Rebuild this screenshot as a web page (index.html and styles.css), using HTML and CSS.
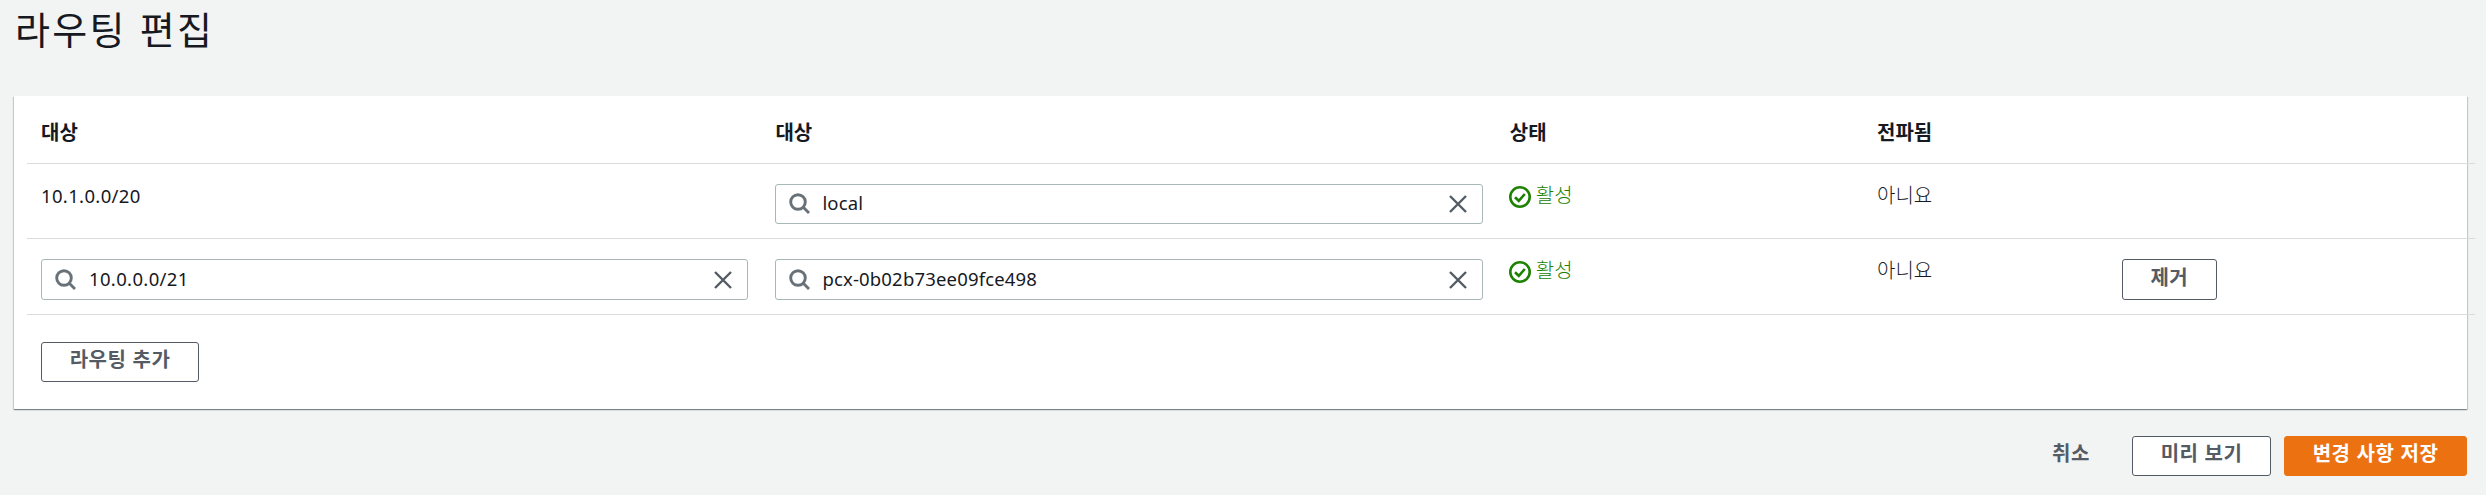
FILE: index.html
```html
<!DOCTYPE html>
<html lang="ko">
<head>
<meta charset="utf-8">
<title>라우팅 편집</title>
<link rel="stylesheet" href="styles.css">
</head>
<body>
<svg class="defs" width="0" height="0" aria-hidden="true">
  <symbol id="search" viewBox="0 0 22 22"><circle cx="9" cy="9" r="7.3"/><path d="M14 14l6 6"/></symbol>
  <symbol id="close" viewBox="0 0 20 20"><path d="M2 2l16 16M18 2L2 18"/></symbol>
  <symbol id="ok" viewBox="0 0 22 22"><circle cx="11" cy="11" r="9.7"/><path d="M6 11.2l3.8 3.6L15.8 8"/></symbol>
</svg>
<main class="page">
  <h1 class="title">라우팅 편집</h1>
  <section class="card">
    <div class="table">
      <div class="row head">
        <div class="cell">대상</div>
        <div class="cell">대상</div>
        <div class="cell">상태</div>
        <div class="cell">전파됨</div>
        <div class="cell"></div>
      </div>
      <div class="row">
        <div class="cell latin static">10.1.0.0/20</div>
        <div class="cell"><div class="field latin"><svg class="search"><use href="#search"/></svg><span class="value word">local</span><svg class="close"><use href="#close"/></svg></div></div>
        <div class="cell status"><svg class="ok"><use href="#ok"/></svg><span>활성</span></div>
        <div class="cell plain">아니요</div>
        <div class="cell"></div>
      </div>
      <div class="row last">
        <div class="cell"><div class="field latin"><svg class="search"><use href="#search"/></svg><span class="value">10.0.0.0/21</span><svg class="close"><use href="#close"/></svg></div></div>
        <div class="cell"><div class="field latin"><svg class="search"><use href="#search"/></svg><span class="value word">pcx-0b02b73ee09fce498</span><svg class="close"><use href="#close"/></svg></div></div>
        <div class="cell status"><svg class="ok"><use href="#ok"/></svg><span>활성</span></div>
        <div class="cell plain">아니요</div>
        <div class="cell"><button class="btn remove">제거</button></div>
      </div>
    </div>
    <button class="btn add">라우팅 추가</button>
  </section>
  <footer class="actions">
    <button class="btn link">취소</button>
    <button class="btn preview">미리 보기</button>
    <button class="btn primary">변경 사항 저장</button>
  </footer>
</main>
</body>
</html>
```
FILE: styles.css
```css
* { box-sizing: border-box; }
html, body { height: 495px; overflow: hidden; }
body {
  margin: 0;
  background: #f2f3f3;
  color: #16191f;
  font: 20px/28px "Noto Sans CJK KR", sans-serif;
}
.defs { position: absolute; }
.page { height: 495px; padding: 0 19px 0 14px; overflow: hidden; }
.title {
  margin: 0;
  height: 96px;
  padding: 4px 0 0 1px;
  font-size: 38px;
  line-height: 48px;
  font-weight: 400;
  letter-spacing: 2.3px;
}
.card {
  height: 313px;
  padding-left: 13px;
  background: #fff;
  box-shadow: 0 1px 1px 0 rgba(0, 28, 36, .3), 1px 1px 1px 0 rgba(0, 28, 36, .15), -1px 1px 1px 0 rgba(0, 28, 36, .15);
}
.table { width: 2448px; }
.row {
  display: grid;
  grid-template-columns: 6fr 6fr 3fr 2fr 3fr;
  height: 75px;
  border-bottom: 1px solid #d9dcdc;
}
.row.head { height: 68px; font-weight: 700; }
.row.last { height: 76px; }
.cell { padding: 20px 13px 0 14px; min-width: 0; white-space: nowrap; }
.head .cell { padding-top: 22px; }
.latin { font-family: "Noto Sans", "Noto Sans CJK KR", sans-serif; font-size: 18.5px; letter-spacing: .35px; }
.cell.static { padding: 18px 0 0 14px; }
.field {
  display: flex;
  align-items: center;
  height: 40px;
  padding: 0 14px 0 13px;
  border: 1px solid #aab7b8;
  border-radius: 3px;
  background: #fff;
}
.last .field, .last .remove { height: 41px; }
svg { fill: none; flex: none; }
.search { width: 22px; height: 22px; stroke: #687078; stroke-width: 2.9; }
.close { width: 20px; height: 20px; margin-left: auto; stroke: #545b64; stroke-width: 2.4; }
.value { margin-left: 12px; padding-bottom: 2px; }
.word { margin-left: 11px; letter-spacing: .17px; }
.status { display: flex; align-items: flex-start; gap: 5px; color: #1d8102; }
.row .status, .row .plain { padding-top: 17px; font-weight: 300; }
.ok { width: 22px; height: 22px; margin: 5px 0 0 -1px; stroke: #1d8102; stroke-width: 2.6; }
.btn {
  display: flex;
  align-items: center;
  justify-content: center;
  height: 40px;
  padding: 0 0 6px;
  border: 1px solid #545b64;
  border-radius: 3px;
  background: #fff;
  color: #545b64;
  font: 700 20px/28px "Noto Sans CJK KR", sans-serif;
  letter-spacing: .5px;
  white-space: nowrap;
}
.remove { width: 95px; }
.add { width: 158px; margin: 27px 0 0 14px; }
.actions { display: flex; justify-content: flex-end; padding-top: 27px; }
.link { width: 40px; margin-right: 41px; border-color: transparent; background: none; }
.preview { width: 139px; margin-right: 13px; }
.primary { width: 183px; border-color: #ec7211; background: #ec7211; color: #fff; }
```
